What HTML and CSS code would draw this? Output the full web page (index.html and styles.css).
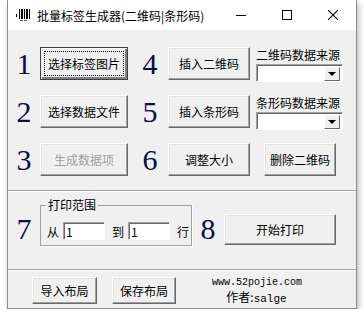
FILE: index.html
```html
<!DOCTYPE html>
<html>
<head>
	<meta charset="UTF-8">
	<title>批量标签生成器</title>
	<link rel="stylesheet" href="styles.css">
</head>
<body>
<div class="window">
	<div class="titlebar">
		<svg class="app-icon" width="16" height="13" viewBox="0 0 16 13">
			<rect x="0" y="5" width="1" height="3" fill="#000"/>
			<rect x="3" y="0" width="1" height="10" fill="#000"/>
			<rect x="5" y="0" width="2" height="10" fill="#000"/>
			<rect x="8" y="0" width="1" height="10" fill="#000"/>
			<rect x="10" y="0" width="2" height="10" fill="#000"/>
			<rect x="13" y="0" width="1" height="10" fill="#000"/>
			<rect x="4" y="11" width="3" height="1" fill="#555"/>
			<rect x="8" y="11" width="3" height="1" fill="#555"/>
		</svg>
		<span class="title">批量标签生成器(二维码|条形码)</span>
		<div class="caption">
			<span class="cap"><svg width="10" height="10" viewBox="0 0 10 10"><rect x="0" y="5" width="10" height="1" fill="#000"/></svg></span>
			<span class="cap"><svg width="10" height="10" viewBox="0 0 10 10"><rect x="0.5" y="0.5" width="9" height="9" fill="none" stroke="#000"/></svg></span>
			<span class="cap"><svg width="10" height="10" viewBox="0 0 10 10"><path d="M0 0 L10 10 M10 0 L0 10" stroke="#000" stroke-width="1.1"/></svg></span>
		</div>
	</div>

	<div class="client">
		<!-- 第一行 -->
		<div class="row">
			<span class="num">1</span>
			<button class="btn w88 focus">选择标签图片</button>
			<span class="num mid">4</span>
			<button class="btn w82">插入二维码</button>
			<div class="src">
				<div class="src-label">二维码数据来源</div>
				<div class="combo"><span class="drop"></span></div>
			</div>
		</div>
		<!-- 第二行 -->
		<div class="row">
			<span class="num">2</span>
			<button class="btn w88">选择数据文件</button>
			<span class="num mid">5</span>
			<button class="btn w82">插入条形码</button>
			<div class="src">
				<div class="src-label">条形码数据来源</div>
				<div class="combo"><span class="drop"></span></div>
			</div>
		</div>
		<!-- 第三行 -->
		<div class="row">
			<span class="num">3</span>
			<button class="btn w88 disabled">生成数据项</button>
			<span class="num mid">6</span>
			<button class="btn w82">调整大小</button>
			<button class="btn w72 del">删除二维码</button>
		</div>

		<div class="sep first"></div>

		<div class="print-row">
			<span class="num">7</span>
			<fieldset class="range">
				<legend>打印范围</legend>
				<span>从</span><input class="box" type="text" value="1">
				<span class="to">到</span><input class="box" type="text" value="1">
				<span class="to">行</span>
			</fieldset>
			<span class="num n8">8</span>
			<button class="btn print">开始打印</button>
		</div>

		<div class="sep second"></div>

		<div class="bottom">
			<button class="btn small">导入布局</button>
			<button class="btn small save">保存布局</button>
			<div class="credit">
				<div class="url">www.52pojie.com</div>
				<div class="author">作者:<span class="mono">salge</span></div>
			</div>
		</div>
	</div>
</div>
</body>
</html>
```

FILE: styles.css
```css
body {
	margin: 0;
	background: #fff;
	font-family: "Noto Sans CJK SC", "Noto Sans", sans-serif;
	font-size: 12px;
	color: #000;
}
.window {
	margin-left: 7px;
	width: 348px;
	height: 308px;
	border: 1px solid #8c8c8c;
	border-top: none;
	background: #f0f0f0;
	box-shadow: 2px 3px 6px rgba(0,0,0,0.25);
}
.titlebar {
	height: 30px;
	background: #fff;
	display: flex;
	align-items: center;
}
.app-icon { margin-left: 8px; margin-top: 1px; }
.title { margin-left: 5px; font-size: 12px; }
.caption { margin-left: auto; display: flex; }
.cap {
	width: 46px;
	height: 30px;
	display: flex;
	align-items: center;
	justify-content: center;
}

.client { padding-top: 17px; }
.row {
	display: flex;
	align-items: flex-start;
	height: 33px;
	margin-bottom: 15px;
}
.num {
	width: 32px;
	height: 33px;
	line-height: 33px;
	text-align: center;
	font-family: "Liberation Serif", serif;
	font-size: 30px;
	color: #0c0c48;
}
.num.mid { width: 40px; padding-left: 4px; box-sizing: border-box; }

.btn {
	height: 33px;
	padding: 0;
	background: #f0f0f0;
	font-family: "Noto Sans CJK SC", "Noto Sans", sans-serif;
	font-size: 12px;
	color: #000;
	border: 1px solid;
	border-color: #fff #696969 #696969 #fff;
	box-shadow: inset -1px -1px #a0a0a0, inset 1px 1px #e3e3e3;
	box-sizing: border-box;
}
.w88 { width: 88px; }
.w82 { width: 82px; }
.w72 { width: 72px; }
.btn.focus {
	border: 1px solid #404040;
	box-shadow: inset 1px 1px #fff, inset -2px -2px #808080;
	outline: 1px dotted #000;
	outline-offset: -5px;
}
.btn.disabled { color: #a0a0a0; }
.btn.del { margin-left: 14px; }

.src { margin-left: 6px; width: 87px; }
.src-label { height: 17px; line-height: 15px; }
.combo {
	height: 18px;
	background: #fff;
	border: 1px solid;
	border-color: #a0a0a0 #fff #fff #a0a0a0;
	box-shadow: inset 1px 1px #696969;
	box-sizing: border-box;
	display: flex;
	justify-content: flex-end;
	padding: 2px;
}
.drop {
	width: 16px;
	height: 14px;
	background: #f0f0f0;
	border: 1px solid;
	border-color: #fff #696969 #696969 #fff;
	box-sizing: border-box;
	position: relative;
}
.drop::after {
	content: "";
	position: absolute;
	left: 3px;
	top: 4px;
	border-left: 4px solid transparent;
	border-right: 4px solid transparent;
	border-top: 4px solid #000;
}

.sep {
	height: 0;
	border-top: 1px solid #a0a0a0;
	border-bottom: 1px solid #fff;
}
.sep.first { margin-top: -1px; }
.sep.second { margin-top: 15px; }

.print-row {
	display: flex;
	align-items: center;
	margin-top: 5px;
	height: 57px;
}
.print-row .num { height: 36px; line-height: 36px; margin-top: 6px; }
.range {
	width: 152px;
	height: 49px;
	margin: 0;
	padding: 4px 0 0 6px;
	box-sizing: border-box;
	border: 1px solid #a0a0a0;
	box-shadow: 1px 1px #fff;
	align-self: flex-start;
	display: flex;
	align-items: center;
	font-size: 12px;
}
.range legend {
	padding: 0 2px;
	margin-left: -1px;
	line-height: 16px;
}
.box {
	width: 42px;
	height: 18px;
	margin: 0 0 0 4px;
	padding: 0 2px;
	box-sizing: border-box;
	border: 1px solid;
	border-color: #a0a0a0 #fff #fff #a0a0a0;
	box-shadow: inset 1px 1px #696969;
	font-family: "Noto Sans CJK SC", sans-serif;
	font-size: 12px;
	background: #fff;
}
.to { margin-left: 7px; }
.num.n8 { width: 32px; }
.btn.print { width: 112px; height: 31px; margin-top: 7px; }

.bottom {
	display: flex;
	align-items: flex-start;
	padding-left: 24px;
	margin-top: 6px;
}
.btn.small { width: 65px; height: 27px; }
.btn.save { margin-left: 15px; width: 64px; }
.credit {
	margin-left: 36px;
	width: 89px;
	text-align: center;
}
.url {
	font-family: "Liberation Mono", monospace;
	font-size: 10px;
	line-height: 11px;
	height: 11px;
}
.author { font-size: 12px; line-height: 17px; height: 17px; }
.mono { font-family: "Liberation Mono", monospace; font-size: 11px; }
```
